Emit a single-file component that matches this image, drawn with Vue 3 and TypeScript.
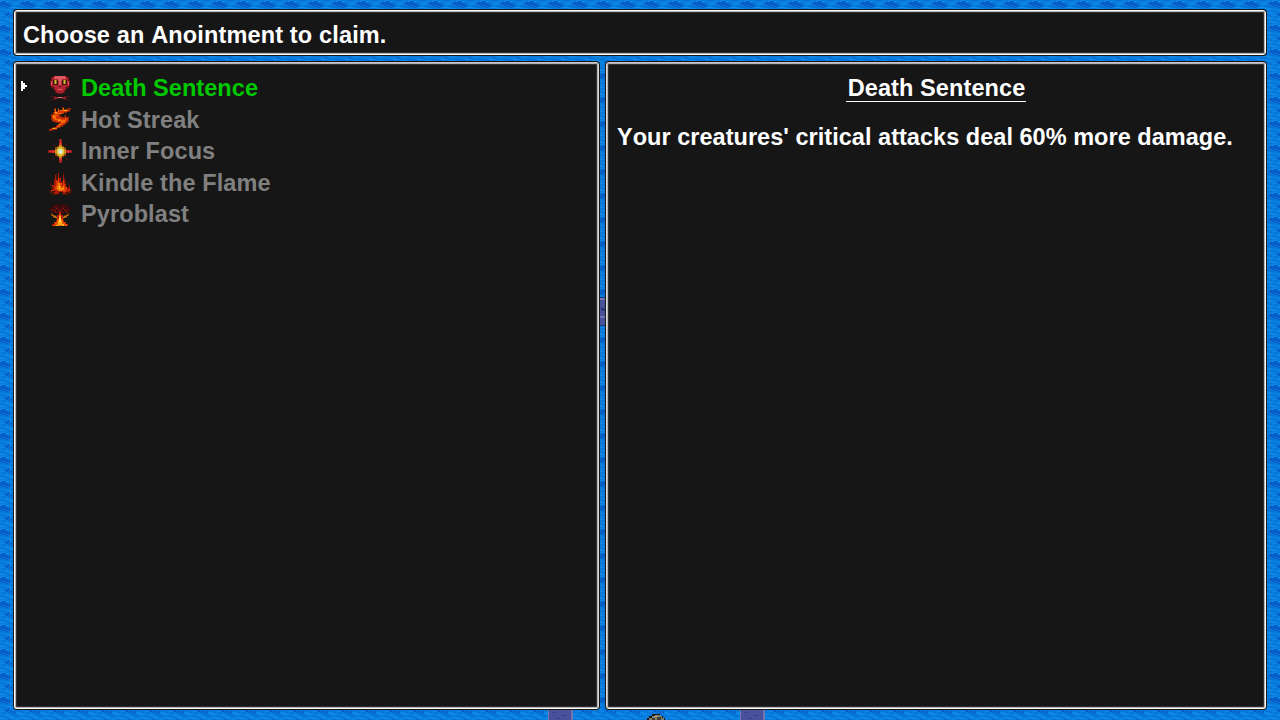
<script setup lang="ts">
import { ref, computed } from 'vue'

interface Shape { c: string; p: string }
interface Anointment { name: string; text: string; icon: Shape[] }

const rect = (x: number, y: number, w: number, h: number) => `M${x} ${y}h${w}v${h}h${-w}z`

const skull: Shape[] = [
  { c: '#6b141b', p: 'M27 12H69V15H75V24H78V42H75V48H69V54H63V63H57V66H39V63H33V54H27V48H21V42H18V24H21V15H27Z' },
  { c: '#b22531', p: 'M30 12H66V18H72V27H75V42H69V45H63V54H60V60H54V63H42V60H36V54H33V45H27V42H21V27H24V18H30Z' },
  { c: '#db5a62', p: 'M33 12H63V15H66V21H54V27H51V39H45V27H42V21H30V15H33Z' + rect(21, 30, 3, 9) + rect(72, 30, 3, 9) + rect(42, 51, 12, 3) },
  { c: '#451310', p: rect(27, 24, 15, 15) + rect(54, 24, 15, 15) + rect(45, 42, 6, 3) },
  { c: '#8a6a18', p: rect(30, 24, 9, 12) + rect(57, 24, 9, 12) },
  { c: '#d2bd30', p: rect(33, 24, 3, 12) + rect(60, 24, 3, 12) },
  { c: '#8b1b24', p: rect(39, 57, 3, 6) + rect(45, 57, 3, 6) + rect(54, 57, 3, 6) },
  { c: '#4b1215', p: rect(18, 72, 18, 3) + rect(60, 72, 18, 3) + rect(18, 81, 18, 3) + rect(60, 81, 18, 3) },
  { c: '#8d2329', p: rect(30, 75, 12, 3) + rect(54, 75, 12, 3) + rect(30, 78, 12, 3) + rect(54, 78, 12, 3) },
  { c: '#dc7777', p: rect(42, 75, 12, 3) },
]

const streak: Shape[] = [
  { c: '#8c2407', p: 'M21 30H27V24H30V12H36V21H42V12H45V18H54V9H60V15H69V12H81V18H78V24H69V27H60V30H51V33H48V36H54V39H60V36H63V30H66V39H72V36H75V51H72V57H66V63H57V69H48V72H39V78H27V81H15V75H21V72H27V69H36V63H42V60H45V57H33V54H24V48H21Z' },
  { c: '#dc3305', p: 'M24 33H30V24H42V21H51V18H75V21H69V24H60V27H51V30H45V39H51V42H60V45H63V39H66V42H72V51H66V57H60V63H51V66H42V72H33V75H24V78H18V75H24V72H33V69H42V63H48V54H36V51H27V45H24Z' },
  { c: '#f16a06', p: rect(33, 15, 3, 12) + rect(42, 15, 3, 9) + rect(57, 12, 3, 9) + rect(48, 18, 24, 3) + rect(33, 27, 21, 3) + rect(27, 33, 12, 3) + rect(27, 36, 9, 9) + rect(33, 45, 18, 3) + rect(45, 48, 18, 3) + rect(51, 51, 12, 6) + rect(42, 60, 12, 3) + rect(39, 66, 9, 3) + rect(24, 72, 15, 3) + rect(63, 42, 3, 9) },
  { c: '#ffb318', p: rect(33, 24, 6, 3) + rect(60, 18, 9, 3) + rect(27, 36, 3, 3) + rect(42, 48, 6, 3) + rect(27, 72, 6, 3) },
]

const focus: Shape[] = [
  { c: '#4c1715', p: rect(24, 21, 3, 3) + rect(27, 24, 3, 3) + rect(30, 27, 3, 3) + rect(69, 21, 3, 3) + rect(66, 24, 3, 3) + rect(63, 27, 3, 3) + rect(24, 69, 3, 3) + rect(27, 66, 3, 3) + rect(30, 63, 3, 3) + rect(69, 69, 3, 3) + rect(66, 66, 3, 3) + rect(63, 63, 3, 3) },
  { c: '#8f1b1e', p: rect(45, 9, 9, 72) + rect(12, 42, 72, 9) },
  { c: '#dd2e29', p: rect(48, 12, 3, 66) + rect(15, 45, 66, 3) + rect(45, 21, 9, 6) + rect(45, 66, 9, 6) + rect(24, 42, 6, 9) + rect(69, 42, 6, 9) },
  { c: '#80420f', p: 'M39 30H60V33H66V60H60V63H39V60H33V33H39Z' },
  { c: '#c98a18', p: 'M45 27H54V33H60V39H66V54H60V60H54V66H45V60H39V54H33V39H39V33H45Z' },
  { c: '#e0c22e', p: 'M45 33H54V36H57V39H60V54H57V57H54V60H45V57H42V54H39V39H42V36H45Z' },
  { c: '#e3e6a8', p: rect(45, 39, 9, 15) + rect(42, 42, 15, 9) },
  { c: '#cfe9f2', p: rect(45, 42, 6, 9) },
]

const kindle: Shape[] = [
  { c: '#481309', p: 'M18 72V66H21V54H18V45H24V54H30V30H33V18H39V27H42V12H45V27H51V39H57V12H60V30H66V42H69V57H75V48H78V63H84V75H75V81H54V75H42V81H27V78H18Z' },
  { c: '#a91b08', p: 'M21 66H27V57H24V51H30V36H33V21H36V36H42V15H45V30H51V42H57V21H60V36H63V48H66V60H75V54H78V69H75V75H66V78H57V72H45V78H30V72H21Z' },
  { c: '#df3d06', p: 'M33 63V54H36V39H42V30H45V45H54V54H57V36H60V48H63V57H69V66H66V72H57V69H39V66H33Z' + rect(24, 66, 6, 3) + rect(72, 66, 6, 3) },
  { c: '#f98208', p: 'M39 63V54H42V45H48V54H51V60H57V54H60V66H54V69H45V66Z' },
  { c: '#ffbd20', p: rect(45, 54, 3, 9) + rect(54, 60, 3, 3) },
  { c: '#2b100d', p: rect(24, 69, 9, 3) + rect(45, 72, 9, 3) + rect(66, 72, 6, 3) },
]

const pyro: Shape[] = [
  { c: '#330d0d', p: 'M24 15H36V12H60V15H75V21H81V33H75V39H60V42H36V39H24V33H15V24H24Z' },
  { c: '#560f0d', p: rect(30, 18, 12, 6) + rect(51, 18, 15, 3) + rect(21, 27, 15, 6) + rect(60, 27, 15, 6) + rect(42, 27, 12, 9) + rect(36, 36, 24, 3) },
  { c: '#86180b', p: rect(36, 24, 6, 3) + rect(54, 24, 6, 3) + rect(45, 33, 6, 9) + rect(30, 33, 6, 3) + rect(63, 33, 6, 3) },
  { c: '#6e3608', p: 'M21 39H27V45H36V48H60V45H69V39H75V48H69V54H60V57H36V54H27V48H21Z' },
  { c: '#c9720f', p: rect(24, 45, 6, 3) + rect(27, 48, 9, 3) + rect(33, 51, 9, 3) + rect(66, 45, 6, 3) + rect(60, 48, 9, 3) + rect(54, 51, 9, 3) },
  { c: '#b81c05', p: 'M45 36H51V45H57V60H60V66H66V72H72V78H24V72H30V66H36V60H39V45H45Z' },
  { c: '#ea5305', p: 'M45 42H51V57H57V66H63V72H69V78H57V75H54V78H45V75H39V78H27V75H33V66H39V57H45Z' },
  { c: '#ffab18', p: 'M45 48H51V63H54V72H60V78H54V75H45V78H36V75H42V63H45Z' },
  { c: '#ffd744', p: rect(45, 54, 6, 12) },
]

const anointments: Anointment[] = [
  { name: 'Death Sentence', text: "Your creatures' critical attacks deal 60% more damage.", icon: skull },
  { name: 'Hot Streak', text: '', icon: streak },
  { name: 'Inner Focus', text: '', icon: focus },
  { name: 'Kindle the Flame', text: '', icon: kindle },
  { name: 'Pyroblast', text: '', icon: pyro },
]
const selected = ref(0)
const current = computed(() => anointments[selected.value])

// One 24px water tile: '#' deep, '+' mid, '-' light; anything else is base blue.
const water = [
  '....----........++++....',
  '......##..----....++++..',
  '..####.###........---...',
  '####.#####.##......-----',
  '..##########.##...---...',
  '#...###..######.........',
  '++++..####..##......++++',
  '..+++++...##....-----...',
  '---.......+++.......----',
  '-----..........+++++....',
  '.++++......----..+++++..',
  '....+++++....-----......',
  '---......+#.#......-----',
  '.-----..++.##+.++.......',
  '.......++##+#+.+.+...+++',
  '+++..---..##.+##+.##....',
  '.+++....++..+#.#..##.---',
  '---..++++.....++##..----',
  '-----..-----.....+++....',
  '...+++....----...+++++..',
  '.....+++++....---...+++.',
  '.-----.......-----......',
  '...------..+++......----',
  '.++++.......++++........',
]
const pixels = (ch: string) =>
  water.map((row, y) => [...row].map((v, x) => (v === ch ? rect(x, y, 1, 1) : '')).join('')).join('')
const waterShapes: Shape[] = [
  { c: '#0759c4', p: pixels('#') },
  { c: '#0672d3', p: pixels('+') },
  { c: '#108ae8', p: pixels('-') },
]
</script>

<template>
  <main class="screen">
    <svg class="world" width="1280" height="720" shape-rendering="crispEdges" aria-hidden="true">
      <defs>
        <pattern id="water" x="20" y="0" width="24" height="24" patternUnits="userSpaceOnUse">
          <rect width="24" height="24" fill="#087ddd" />
          <path v-for="s in waterShapes" :key="s.c" :d="s.p" :fill="s.c" />
        </pattern>
      </defs>
      <rect width="1280" height="720" fill="url(#water)" />
      <g>
        <rect x="596" y="298" width="24" height="28" fill="#49519b" />
        <path d="M596 298h24v2h-24zM596 316h24v2h-24z" fill="#7376ad" />
        <path d="M600 297h6v1h-6zM600 325h6v1h-6zM601 308h3v1h1v2h-2v-1h-2z" fill="#29336f" />
      </g>
      <g v-for="x in [548, 740]" :key="x">
        <rect :x="x" y="708" width="24" height="12" fill="#49519b" />
        <path :d="`M${x} 708h1v12h-1zM${x + 23} 708h2v12h-2z`" fill="#7376ad" />
        <path :d="`M${x + 4} 712h5v1h-5zM${x + 13} 715h5v1h-5zM${x + 8} 718h4v1h-4z`" fill="#38438a" />
      </g>
      <path d="M647 720v-2h2v-2h3v-2h8v2h3v2h2v2z" fill="#171611" />
      <path d="M649 720v-2h3v-2h3v-1h5v1h2v2h2v2z" fill="#817c6c" />
      <path d="M652 718h3v2h-3zM657 717h4v3h-4z" fill="#3f3d36" />
      <path d="M654 716h4v1h-4z" fill="#aaa58f" />
    </svg>

    <header class="panel prompt">Choose an Anointment to claim.</header>
    <div class="columns">
      <ul class="panel list">
        <li v-for="(a, i) in anointments" :key="a.name" :class="{ active: i === selected }" @click="selected = i">
          <span class="cursor">
            <svg v-if="i === selected" width="6" height="10" viewBox="0 0 6 10" shape-rendering="crispEdges">
              <path d="M0 0h2v2h2v2h2v2h-2v2h-2v2h-2z" fill="#fff" />
            </svg>
          </span>
          <svg class="icon" :style="{ marginTop: `${i * 0.4}px` }" width="32" height="32" viewBox="0 0 96 96">
            <path v-for="(s, k) in a.icon" :key="k" :d="s.p" :fill="s.c" />
          </svg>
          <span class="name">{{ a.name }}</span>
        </li>
      </ul>
      <section class="panel detail">
        <h1><span>{{ current.name }}</span></h1>
        <p>{{ current.text }}</p>
      </section>
    </div>
  </main>
</template>

<style>
html,
body {
  margin: 0;
  overflow: hidden;
  background: #087ddd;
}
</style>

<style scoped>
.screen {
  position: relative;
  box-sizing: border-box;
  width: 1280px;
  height: 720px;
  padding: 10px 14px 11px;
  overflow: hidden;
  display: flex;
  flex-direction: column;
  gap: 7px;
  font: bold 23.5px/32px 'Liberation Sans', Arial, sans-serif;
  font-kerning: none;
  letter-spacing: 0.1px;
  color: #fff;
}
.world {
  position: absolute;
  inset: 0;
}
.panel {
  position: relative;
  box-sizing: border-box;
  background: #161616;
  border: 1px solid #fff;
  border-radius: 3px;
  box-shadow: 0 0 0 1px #161616, inset 0 0 0 1px #b4b2b2, inset 0 0 0 2px #303030;
}
.prompt {
  height: 45px;
  padding: 8px 8px 0;
  letter-spacing: 0.15px;
}
.columns {
  flex: 1;
  min-height: 0;
  display: grid;
  grid-template-columns: 585px 660px;
  gap: 7px;
}
.columns .panel {
  border-top-color: #c8c6ce;
}
.list {
  margin: 0;
  padding: 9px 0 0 5px;
  list-style: none;
  border-right-color: #d8d8d4;
}
.list li {
  display: flex;
  height: 31.6px;
  color: #808080;
}
.list li.active {
  color: #00c800;
  letter-spacing: 0.05px;
}
.cursor {
  width: 24px;
  padding: 9px 0 0 1px;
  box-sizing: border-box;
  line-height: 0;
}
.icon {
  flex: none;
  margin-right: 5px;
}
.detail {
  padding: 9px 10px 0;
  border-left-color: #e4e4e2;
}
h1 {
  margin: 0;
  font: inherit;
  text-align: center;
}
h1 span {
  display: inline-block;
  height: 29px;
  padding: 0 0.5px 0 1.5px;
  border-bottom: 1px solid #fff;
}
p {
  margin: 17px 0 0;
  letter-spacing: 0.03px;
  white-space: nowrap;
}
</style>
